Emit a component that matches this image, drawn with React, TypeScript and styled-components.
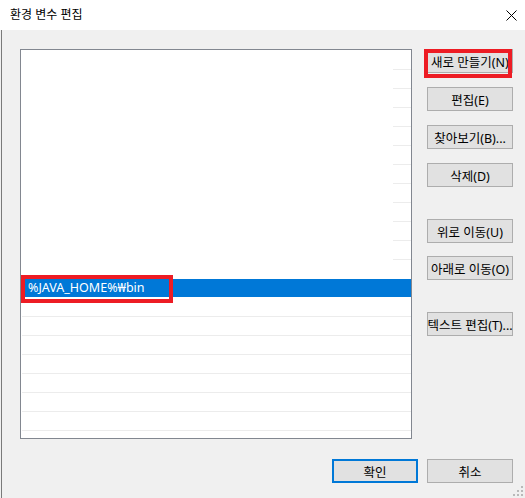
import React from 'react';
import styled, {createGlobalStyle} from 'styled-components';

const GlobalStyle = createGlobalStyle`
    body {
        margin: 0;
        background: #f0f0f0;
    }
`

type RowKind = 'partial' | 'none' | 'selected' | 'full';

const rows: RowKind[] = [
    ...Array(11).fill('partial'),
    'none',
    'selected',
    ...Array(7).fill('full'),
];

const actions = [
    {label: '새로 만들기(N)', gap: 0},
    {label: '편집(E)', gap: 14},
    {label: '찾아보기(B)...', gap: 14},
    {label: '삭제(D)', gap: 14},
    {label: '위로 이동(U)', gap: 32},
    {label: '아래로 이동(O)', gap: 13},
    {label: '텍스트 편집(T)...', gap: 32},
];

export default function App() {
    return (
        <Window>
            <GlobalStyle/>
            <TitleBar>
                <Title>환경 변수 편집</Title>
                <CloseButton>
                    <svg width="11" height="11" viewBox="0 0 11 11">
                        <path d="M0.5 0.5 L10.5 10.5 M10.5 0.5 L0.5 10.5" stroke="#000" strokeWidth="1"/>
                    </svg>
                </CloseButton>
            </TitleBar>

            <Body>
                <Content>
                    <PathList>
                        {rows.map((kind, i) => (
                            <Row key={i} $kind={kind}>
                                {kind === 'selected' && <EditField>%JAVA_HOME%₩bin</EditField>}
                            </Row>
                        ))}
                    </PathList>

                    <ButtonColumn>
                        {actions.map(a => (
                            <ActionButton key={a.label} $gap={a.gap}>{a.label}</ActionButton>
                        ))}
                    </ButtonColumn>
                </Content>

                <Footer>
                    <DialogButton $focused>확인</DialogButton>
                    <DialogButton>취소</DialogButton>
                </Footer>
            </Body>

            <Highlight $left={424} $top={49} $width={88} $height={29}/>
            <Highlight $left={21} $top={275} $width={152} $height={28}/>

            <ResizeGrip>
                <svg width="10" height="10" viewBox="0 0 10 10">
                    <rect x="8" y="0" width="2" height="2" fill="#b9b9b9"/>
                    <rect x="4" y="4" width="2" height="2" fill="#b9b9b9"/>
                    <rect x="8" y="4" width="2" height="2" fill="#b9b9b9"/>
                    <rect x="0" y="8" width="2" height="2" fill="#b9b9b9"/>
                    <rect x="4" y="8" width="2" height="2" fill="#b9b9b9"/>
                    <rect x="8" y="8" width="2" height="2" fill="#b9b9b9"/>
                </svg>
            </ResizeGrip>
        </Window>
    );
}

const Window = styled.div`
    position: relative;
    width: 525px;
    height: 498px;
    overflow: hidden;
    font-family: "Noto Sans", "Noto Sans CJK KR", sans-serif;
    font-size: 12px;
    color: #000;
`

const TitleBar = styled.div`
    height: 30px;
    background: #fff;
    display: flex;
    align-items: center;
    justify-content: space-between;
    padding: 0 8px 0 10px;
`

const Title = styled.span`
    font-size: 12px;
    line-height: 1;
`

const CloseButton = styled.div`
    width: 11px;
    height: 11px;
    display: flex;
`

const Body = styled.div`
    height: 468px;
    background: #f0f0f0;
    box-shadow: inset 1px 0 0 #f0f0f0, inset 2px 0 0 #7a7a7a;
`

const Content = styled.div`
    display: flex;
    align-items: flex-start;
    gap: 15px;
    padding: 19px 0 0 20px;
`

const PathList = styled.div`
    box-sizing: border-box;
    width: 392px;
    height: 390px;
    border: 1px solid #828790;
    background: #fff;
    padding-top: 1px;
`

const lineColor = '#ececec';

const Row = styled.div<{ $kind: RowKind }>`
    box-sizing: border-box;
    height: 19px;
    background: ${p => {
        switch (p.$kind) {
            case 'partial':
                return `linear-gradient(${lineColor}, ${lineColor}) no-repeat right bottom / 18px 1px`;
            case 'full':
                return `linear-gradient(${lineColor}, ${lineColor}) no-repeat 1px bottom / calc(100% - 1px) 1px`;
            case 'selected':
                return 'linear-gradient(#0078d7, #0078d7) no-repeat left top / 100% 18px';
            default:
                return 'none';
        }
    }};
`

const EditField = styled.div`
    box-sizing: border-box;
    width: 143px;
    height: 20px;
    margin-left: 4px;
    padding-left: 3px;
    border-bottom: 2px solid #fff;
    color: #fff;
    font-size: 12.5px;
    line-height: 18px;
    white-space: nowrap;
`

const ButtonColumn = styled.div`
    display: flex;
    flex-direction: column;
    width: 86px;
`

const ActionButton = styled.div<{ $gap: number }>`
    box-sizing: border-box;
    height: 24px;
    margin-top: ${p => p.$gap}px;
    border: 1px solid #adadad;
    background: #e1e1e1;
    display: flex;
    align-items: center;
    justify-content: center;
    white-space: nowrap;
    font-size: 12.5px;
`

const Footer = styled.div`
    display: flex;
    justify-content: flex-end;
    gap: 9px;
    padding-right: 12px;
    margin-top: 20px;
`

const DialogButton = styled.div<{ $focused?: boolean }>`
    box-sizing: border-box;
    width: 86px;
    height: 24px;
    border: ${p => p.$focused ? '2px solid #0078d7' : '1px solid #adadad'};
    background: #e1e1e1;
    display: flex;
    align-items: center;
    justify-content: center;
    font-size: 12.5px;
`

const Highlight = styled.div<{ $left: number; $top: number; $width: number; $height: number }>`
    position: absolute;
    left: ${p => p.$left}px;
    top: ${p => p.$top}px;
    width: ${p => p.$width}px;
    height: ${p => p.$height}px;
    box-sizing: border-box;
    border: 4px solid #ed1c24;
    pointer-events: none;
`

const ResizeGrip = styled.div`
    position: absolute;
    right: 2px;
    bottom: 2px;
    width: 10px;
    height: 10px;
    display: flex;
`
